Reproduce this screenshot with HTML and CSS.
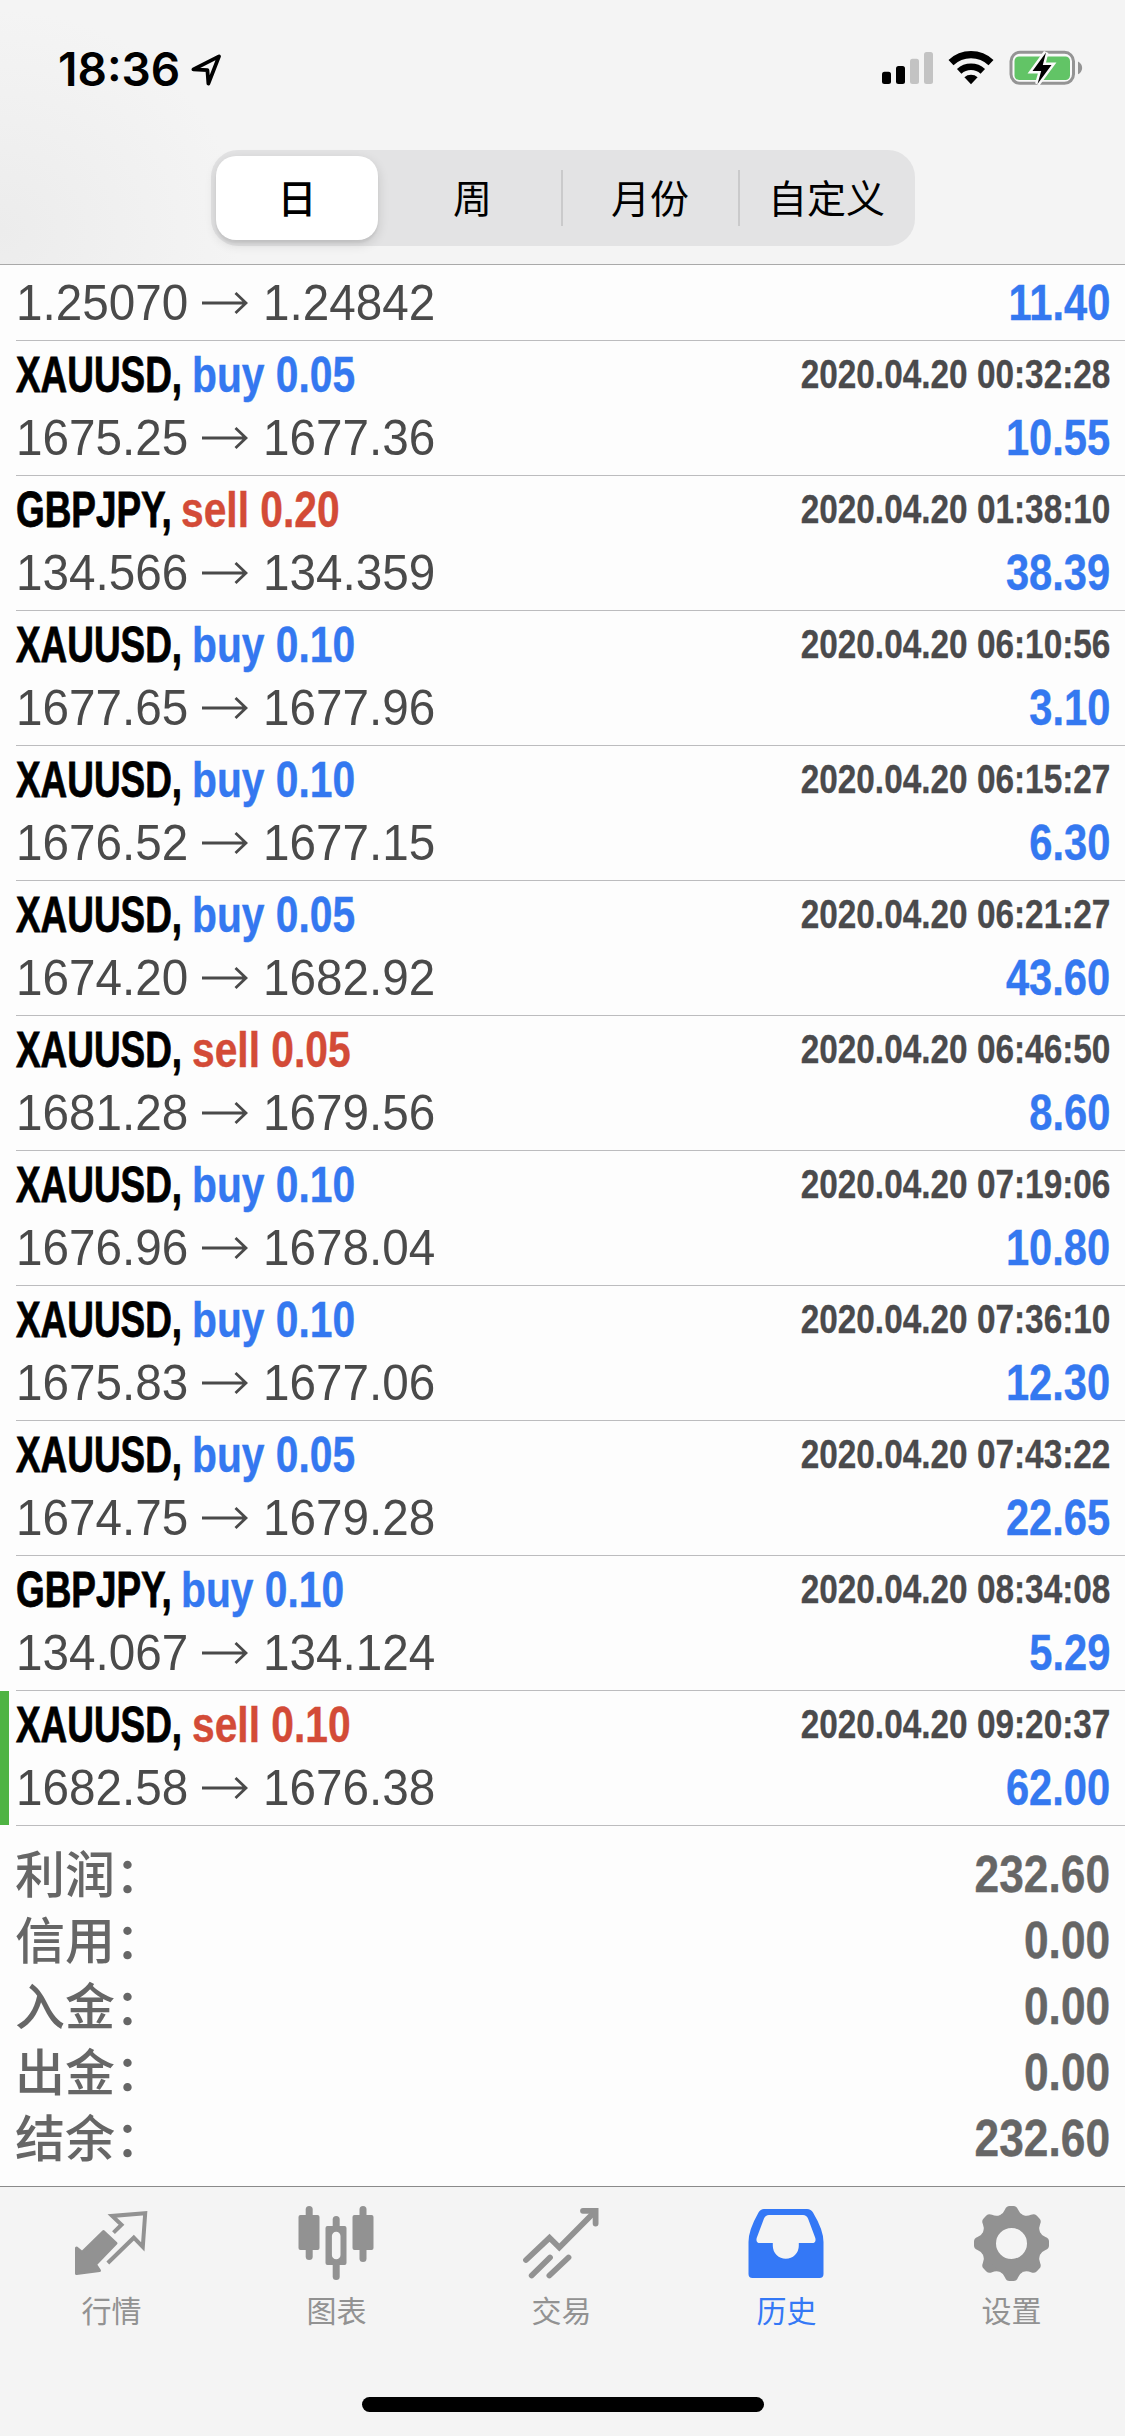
FILE: index.html
```html
<!DOCTYPE html>
<html lang="zh-CN">
<head>
<meta charset="utf-8">
<title>历史</title>
<link rel="stylesheet" href="styles.css">
</head>
<body>
<div class="screen">
  <header class="header">
    <div class="status">
      <div class="status-left">
        <span class="time">18:36</span>
        <svg class="location" width="32" height="34" viewBox="0 0 32 34"><path d="M3.4 17.4 29 4.4 18.4 31.6 17.4 18.2Z" fill="none" stroke="#000" stroke-width="3.8" stroke-linejoin="round"/></svg>
      </div>
      <svg class="indicators" width="216" height="60" viewBox="0 0 216 60">
        <rect x="12" y="32.7" width="9" height="12.3" rx="2.5"/>
        <rect x="26" y="27" width="9" height="18" rx="2.5"/>
        <rect x="40" y="19.7" width="9" height="25.3" rx="2.5" fill="#c3c3c3"/>
        <rect x="54" y="13" width="9" height="32" rx="2.5" fill="#c3c3c3"/>
        <path d="M81 23.6a29 29 0 0 1 40 0" fill="none" stroke="#000" stroke-width="7.2"/>
        <path d="M89.2 32.4a17.5 17.5 0 0 1 23.6 0" fill="none" stroke="#000" stroke-width="6.6"/>
        <path d="M101 45.2 94.4 38.3a10 10 0 0 1 13.2 0Z"/>
        <rect x="141" y="13.3" width="62.5" height="31" rx="9" fill="#f9f9f9" stroke="#949494" stroke-width="3"/>
        <rect x="144.5" y="17.5" width="55.5" height="23.5" rx="4.5" fill="#62c466"/>
        <path d="M208 22.5c5.5 2.5 5.5 10.3 0 12.8Z" fill="#949494"/>
        <path d="M176 13.5 162.5 32h8.7L167.5 45 181.5 26h-8.7Z" fill="#000" stroke="#fafafa" stroke-width="5" paint-order="stroke"/>
      </svg>
    </div>
    <nav class="segments">
      <div class="segment selected">日</div>
      <div class="segment">周</div>
      <div class="segment divided">月份</div>
      <div class="segment divided">自定义</div>
    </nav>
  </header>

  <svg width="0" height="0" class="defs"><symbol id="arrow" viewBox="0 0 46 24"><path d="M0 12H44M33.5 2 44 12 33.5 22" fill="none" stroke="#4a4a4a" stroke-width="2.8"/></symbol></svg>

  <main class="deals">
    <article class="deal partial">
      <div class="line prices"><span class="price">1.25070</span><svg class="arrow"><use href="#arrow"/></svg><span class="price">1.24842</span><span class="profit">11.40</span></div>
    </article>
    <article class="deal">
      <div class="line title"><span class="symbol gold">XAUUSD,</span><span class="side buy">buy 0.05</span><time class="date">2020.04.20 00:32:28</time></div>
      <div class="line prices"><span class="price">1675.25</span><svg class="arrow"><use href="#arrow"/></svg><span class="price">1677.36</span><span class="profit">10.55</span></div>
    </article>
    <article class="deal">
      <div class="line title"><span class="symbol pound">GBPJPY,</span><span class="side sell">sell 0.20</span><time class="date">2020.04.20 01:38:10</time></div>
      <div class="line prices"><span class="price">134.566</span><svg class="arrow"><use href="#arrow"/></svg><span class="price">134.359</span><span class="profit">38.39</span></div>
    </article>
    <article class="deal">
      <div class="line title"><span class="symbol gold">XAUUSD,</span><span class="side buy">buy 0.10</span><time class="date">2020.04.20 06:10:56</time></div>
      <div class="line prices"><span class="price">1677.65</span><svg class="arrow"><use href="#arrow"/></svg><span class="price">1677.96</span><span class="profit">3.10</span></div>
    </article>
    <article class="deal">
      <div class="line title"><span class="symbol gold">XAUUSD,</span><span class="side buy">buy 0.10</span><time class="date">2020.04.20 06:15:27</time></div>
      <div class="line prices"><span class="price">1676.52</span><svg class="arrow"><use href="#arrow"/></svg><span class="price">1677.15</span><span class="profit">6.30</span></div>
    </article>
    <article class="deal">
      <div class="line title"><span class="symbol gold">XAUUSD,</span><span class="side buy">buy 0.05</span><time class="date">2020.04.20 06:21:27</time></div>
      <div class="line prices"><span class="price">1674.20</span><svg class="arrow"><use href="#arrow"/></svg><span class="price">1682.92</span><span class="profit">43.60</span></div>
    </article>
    <article class="deal">
      <div class="line title"><span class="symbol gold">XAUUSD,</span><span class="side sell">sell 0.05</span><time class="date">2020.04.20 06:46:50</time></div>
      <div class="line prices"><span class="price">1681.28</span><svg class="arrow"><use href="#arrow"/></svg><span class="price">1679.56</span><span class="profit">8.60</span></div>
    </article>
    <article class="deal">
      <div class="line title"><span class="symbol gold">XAUUSD,</span><span class="side buy">buy 0.10</span><time class="date">2020.04.20 07:19:06</time></div>
      <div class="line prices"><span class="price">1676.96</span><svg class="arrow"><use href="#arrow"/></svg><span class="price">1678.04</span><span class="profit">10.80</span></div>
    </article>
    <article class="deal">
      <div class="line title"><span class="symbol gold">XAUUSD,</span><span class="side buy">buy 0.10</span><time class="date">2020.04.20 07:36:10</time></div>
      <div class="line prices"><span class="price">1675.83</span><svg class="arrow"><use href="#arrow"/></svg><span class="price">1677.06</span><span class="profit">12.30</span></div>
    </article>
    <article class="deal">
      <div class="line title"><span class="symbol gold">XAUUSD,</span><span class="side buy">buy 0.05</span><time class="date">2020.04.20 07:43:22</time></div>
      <div class="line prices"><span class="price">1674.75</span><svg class="arrow"><use href="#arrow"/></svg><span class="price">1679.28</span><span class="profit">22.65</span></div>
    </article>
    <article class="deal">
      <div class="line title"><span class="symbol pound">GBPJPY,</span><span class="side buy">buy 0.10</span><time class="date">2020.04.20 08:34:08</time></div>
      <div class="line prices"><span class="price">134.067</span><svg class="arrow"><use href="#arrow"/></svg><span class="price">134.124</span><span class="profit">5.29</span></div>
    </article>
    <article class="deal marked">
      <div class="line title"><span class="symbol gold">XAUUSD,</span><span class="side sell">sell 0.10</span><time class="date">2020.04.20 09:20:37</time></div>
      <div class="line prices"><span class="price">1682.58</span><svg class="arrow"><use href="#arrow"/></svg><span class="price">1676.38</span><span class="profit">62.00</span></div>
    </article>
  </main>

  <section class="summary">
    <div class="total"><span class="label">利润：</span><span class="amount">232.60</span></div>
    <div class="total"><span class="label">信用：</span><span class="amount">0.00</span></div>
    <div class="total"><span class="label">入金：</span><span class="amount">0.00</span></div>
    <div class="total"><span class="label">出金：</span><span class="amount">0.00</span></div>
    <div class="total"><span class="label">结余：</span><span class="amount">232.60</span></div>
  </section>

  <footer class="footer">
    <nav class="tabs">
      <div class="tab">
        <svg class="icon" viewBox="0 0 90 84"><path d="M46.5 32.7 54.5 24.7 45.2 16 78.2 13.3 75.8 47 66.8 37.7 40.8 63" fill="none" stroke="currentColor" stroke-width="4"/><path d="M36.500 31.500 49 43.300 28.500 64.500 32.500 70.500 9.500 73.500 9.500 48 15 52.500Z" fill="currentColor" stroke="currentColor" stroke-width="3" stroke-linejoin="round"/></svg>
        <span>行情</span>
      </div>
      <div class="tab">
        <svg class="icon" viewBox="0 0 90 84" fill="currentColor"><rect x="6.5" y="15" width="21" height="35" rx="2"/><rect x="13.7" y="6" width="7" height="54" rx="3.5"/><path fill-rule="evenodd" d="M35.500 26h17a2 2 0 0 1 2 2v35a2 2 0 0 1-2 2h-17a2 2 0 0 1-2-2V28a2 2 0 0 1 2-2ZM44.200 31.700a4.300 4.300 0 0 0-4.300 4.300v19a4.300 4.300 0 0 0 8.600 0V36a4.300 4.300 0 0 0-4.300-4.300Z"/><rect x="40.7" y="16" width="7" height="14" rx="3.5"/><rect x="40.7" y="61" width="7" height="19" rx="3.5"/><rect x="60.5" y="15" width="21" height="35" rx="2"/><rect x="67.500" y="6" width="7" height="56" rx="3.5"/></svg>
        <span>图表</span>
      </div>
      <div class="tab">
        <svg class="icon" viewBox="0 0 90 84"><g fill="none" stroke="currentColor" stroke-width="5.8" stroke-linecap="round"><path d="M9 60 32.5 37.8 42.3 47.5 77.5 12"/><path d="M66 10.8H78.6V23.5"/><path d="M14.700 75.500 33 57.500M32.400 75.500 51.500 57.500"/></g></svg>
        <span>交易</span>
      </div>
      <div class="tab active">
        <svg class="icon" viewBox="0 0 90 84"><path fill="currentColor" fill-rule="evenodd" d="M22 9H65Q69 9 71 12.500 81.500 30 81.500 42V74Q81.500 78 77.500 78H10.500Q6.500 78 6.500 74V42Q6.500 30 16.500 12.500 18.500 9 22 9ZM27 15Q23.500 15 22 18.500L14.700 38Q13.500 43 18 43H30.800V45.700A13 13 0 0 0 56.800 45.700V43H70Q74.500 43 73.300 38L66 18.500Q64.500 15 61 15Z"/></svg>
        <span>历史</span>
      </div>
      <div class="tab">
        <svg class="icon" viewBox="0 0 90 84"><defs><path id="tooth" d="M-12-28Q-8-30-6.500-34-5.200-37.500-2-37.500H2Q5.200-37.500 6.500-34 8-30 12-28Z"/></defs><g transform="translate(44.500 43.500)" fill="currentColor"><circle r="23" fill="none" stroke="currentColor" stroke-width="15"/><use href="#tooth"/><use href="#tooth" transform="rotate(45)"/><use href="#tooth" transform="rotate(90)"/><use href="#tooth" transform="rotate(135)"/><use href="#tooth" transform="rotate(180)"/><use href="#tooth" transform="rotate(225)"/><use href="#tooth" transform="rotate(270)"/><use href="#tooth" transform="rotate(315)"/></g></svg>
        <span>设置</span>
      </div>
    </nav>
    <div class="home-bar"></div>
  </footer>
</div>
</body>
</html>
```
FILE: styles.css
```css
* { box-sizing: border-box; }

body { margin: 0; background: #fdfdfd; }

.screen {
  display: flex;
  flex-direction: column;
  width: 1125px;
  height: 2436px;
  overflow: hidden;
  background: #fdfdfd;
  font-family: "Liberation Sans", "Noto Sans CJK SC", sans-serif;
  white-space: nowrap;
}

.defs { display: none; }

/* Header */
.header {
  height: 265px;
  flex: none;
  border-bottom: 1px solid #a9a9a9;
  background: radial-gradient(ellipse 240px 220px at 0 230px, #ececec, #f4f4f4);
}

.status {
  display: flex;
  justify-content: space-between;
  align-items: center;
  height: 138px;
  padding: 0 39px 0 58px;
}

.status-left { display: flex; align-items: center; gap: 10px; }

.time {
  width: 122px;
  font: 600 46px/66px Inter, sans-serif;
}

.segments {
  display: grid;
  grid-template-columns: 172px 179px 177px 176px;
  width: 704px;
  height: 96px;
  margin: 12px 0 0 211px;
  border-radius: 27px;
  background: #e3e3e4;
}

.segment {
  display: flex;
  align-items: center;
  justify-content: center;
  height: 56px;
  margin-top: 20px;
  padding-bottom: 4px;
  color: #000;
  font: 400 39px/52px "Noto Sans CJK SC", sans-serif;
}

.segment.divided {
  margin-left: -1px;
  padding-right: 2px;
  border-left: 2px solid #cacacb;
}

.segment.selected {
  width: 162px;
  height: 84px;
  margin: 6px 5px;
  border-radius: 20px;
  background: #fff;
  box-shadow: 0 4px 12px rgba(0, 0, 0, .14), 0 3px 2px rgba(0, 0, 0, .05);
  font-weight: 500;
}

/* Deals */
.deal {
  position: relative;
  height: 135px;
  margin-left: 16px;
  padding: 1px 15px 0 0;
  border-bottom: 1px solid #bcbcbe;
}

.deal.partial { height: 76px; padding-top: 8px; }

.deal.marked::before {
  content: "";
  position: absolute;
  left: -16px;
  top: 0;
  width: 9px;
  height: 134px;
  background: #4fb443;
}

.line { display: flex; align-items: flex-start; }

.title { height: 66px; font-size: 50px; font-weight: 700; line-height: 67px; }

.symbol {
  color: #000;
  transform: scaleX(.738);
  transform-origin: left;
  -webkit-text-stroke: .8px currentColor;
}
.gold { width: 176px; }
.pound { width: 165px; }

.side {
  transform: scaleX(.815);
  transform-origin: left;
  -webkit-text-stroke: .4px currentColor;
}
.buy { color: #3478f0; }
.sell { color: #d34b37; }

.date {
  margin-left: auto;
  color: #4a4a4c;
  font-size: 40px;
  line-height: 65px;
  transform: scaleX(.834);
  transform-origin: right;
  -webkit-text-stroke: .3px currentColor;
}

.prices { height: 59px; font-size: 50px; line-height: 61px; color: #4a4a4a; }

.price {
  width: 174px;
  transform: scaleX(.953);
  transform-origin: left;
}

.arrow { width: 46px; height: 24px; margin: 17.5px 15px 0 12px; }

.profit {
  margin-left: auto;
  color: #3478f0;
  font-weight: 700;
  transform: scaleX(.833);
  transform-origin: right;
  -webkit-text-stroke: .4px currentColor;
}

/* Totals */
.summary { height: 360px; padding: 15px 15px 0 15px; color: #666; }

.total {
  display: flex;
  justify-content: space-between;
  align-items: flex-start;
  height: 66px;
}

.label { font: 500 50px/60px "Noto Sans CJK SC", sans-serif; }

.amount {
  font-size: 52px;
  font-weight: 700;
  line-height: 66px;
  transform: scaleX(.852);
  transform-origin: right;
  -webkit-text-stroke: .4px currentColor;
}

/* Tab bar */
.footer {
  display: flex;
  flex-direction: column;
  align-items: center;
  flex: 1;
  border-top: 1px solid #8a8a8a;
  background: #f4f4f4;
}

.tabs { display: grid; grid-template-columns: repeat(5, 225px); height: 210px; }

.tab {
  display: flex;
  flex-direction: column;
  align-items: center;
  gap: 5px;
  padding: 13px 2px 0 0;
  color: #929292;
  font: 400 30px/40px "Noto Sans CJK SC", sans-serif;
}

.tab.active { color: #3478f6; }

.icon { width: 90px; height: 84px; }

.home-bar { width: 402px; height: 15px; border-radius: 8px; background: #000; }
```
